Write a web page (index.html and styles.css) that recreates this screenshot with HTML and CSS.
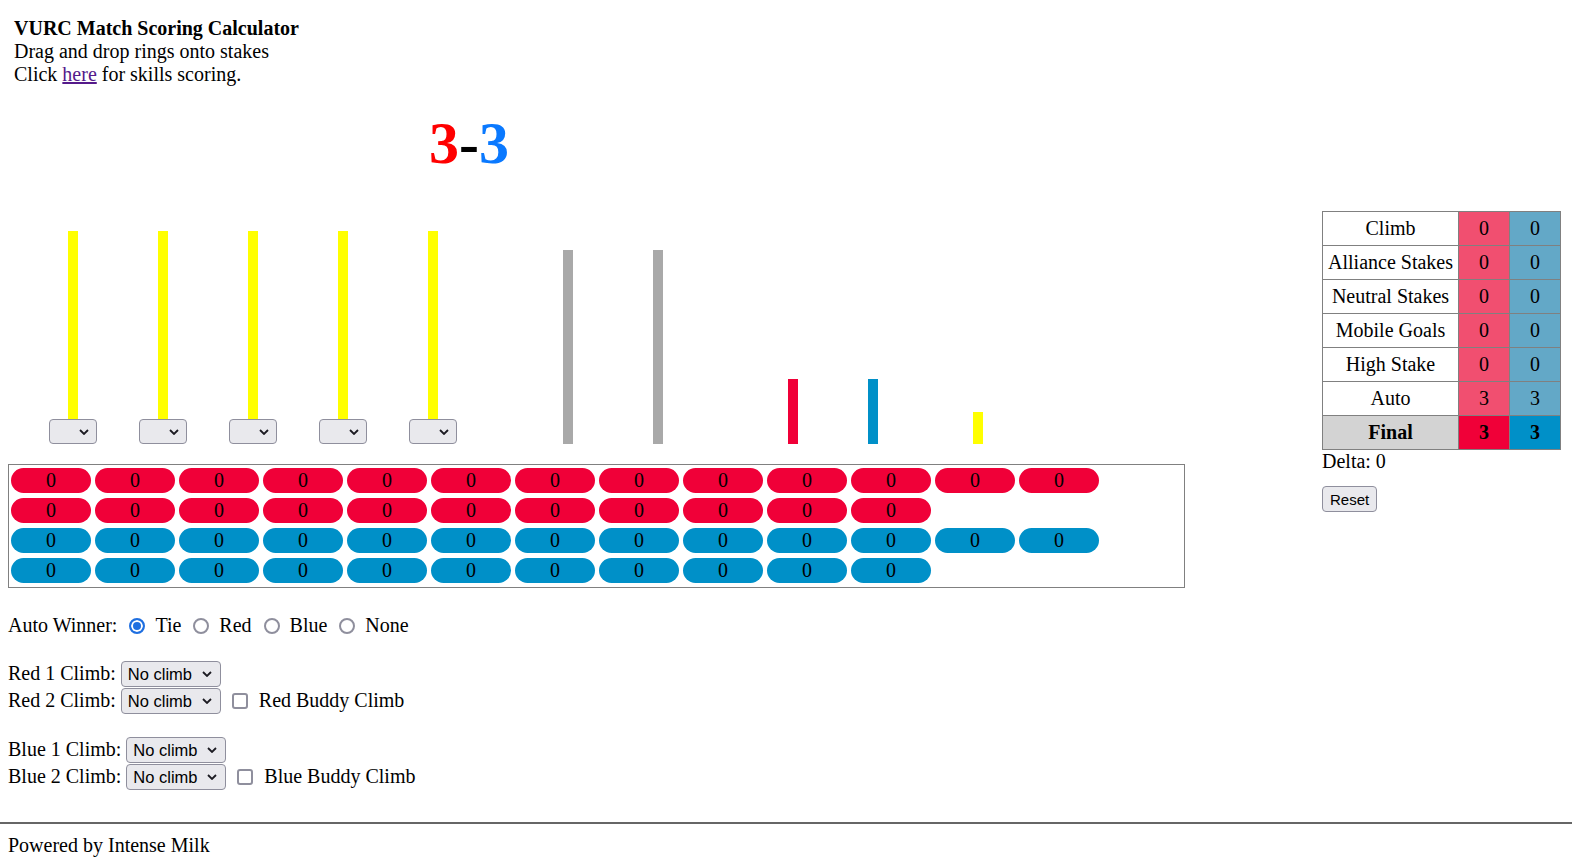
FILE: index.html
```html
<!DOCTYPE html>
<html lang="en">
<head>
    <meta charset="UTF-8">
    <meta name="viewport" content="width=device-width, initial-scale=1.0">
    <title>VURC Match Scoring Calculator</title>
<link rel="stylesheet" href="styles.css">
</head>
<body>
<div class="page">
    <div class="intro">
        <h1>VURC Match Scoring Calculator</h1>
        <div>Drag and drop rings onto stakes</div>
        <div>Click <a href="#">here</a> for skills scoring.</div>
    </div>

    <div class="score"><span class="red-score">3</span>-<span class="blue-score">3</span></div>

    <div class="board">
        <div class="field">
            <!-- mobile goals with their ring stakes -->
            <div class="stakes">
                <div class="stake">
                    <div class="pole goal"></div>
                    <span class="dropdown small">
                        <select class="pick"><option></option><option>Red</option><option>Blue</option></select>
                        <svg class="chev" width="10" height="6" viewBox="0 0 10 6"><path d="M1 1l4 4 4-4" fill="none" stroke="#1c1b22" stroke-width="1.8"/></svg>
                    </span>
                </div>
                <div class="stake">
                    <div class="pole goal"></div>
                    <span class="dropdown small">
                        <select class="pick"><option></option><option>Red</option><option>Blue</option></select>
                        <svg class="chev" width="10" height="6" viewBox="0 0 10 6"><path d="M1 1l4 4 4-4" fill="none" stroke="#1c1b22" stroke-width="1.8"/></svg>
                    </span>
                </div>
                <div class="stake">
                    <div class="pole goal"></div>
                    <span class="dropdown small">
                        <select class="pick"><option></option><option>Red</option><option>Blue</option></select>
                        <svg class="chev" width="10" height="6" viewBox="0 0 10 6"><path d="M1 1l4 4 4-4" fill="none" stroke="#1c1b22" stroke-width="1.8"/></svg>
                    </span>
                </div>
                <div class="stake">
                    <div class="pole goal"></div>
                    <span class="dropdown small">
                        <select class="pick"><option></option><option>Red</option><option>Blue</option></select>
                        <svg class="chev" width="10" height="6" viewBox="0 0 10 6"><path d="M1 1l4 4 4-4" fill="none" stroke="#1c1b22" stroke-width="1.8"/></svg>
                    </span>
                </div>
                <div class="stake">
                    <div class="pole goal"></div>
                    <span class="dropdown small">
                        <select class="pick"><option></option><option>Red</option><option>Blue</option></select>
                        <svg class="chev" width="10" height="6" viewBox="0 0 10 6"><path d="M1 1l4 4 4-4" fill="none" stroke="#1c1b22" stroke-width="1.8"/></svg>
                    </span>
                </div>

                <!-- neutral, alliance and high stakes -->
                <div class="pole neutral n1"></div>
                <div class="pole neutral n2"></div>
                <div class="pole alliance-red"></div>
                <div class="pole alliance-blue"></div>
                <div class="pole high"></div>
            </div>

            <div class="rings">
                <div class="ring-row">
                    <div class="ring red">0</div><div class="ring red">0</div><div class="ring red">0</div><div class="ring red">0</div><div class="ring red">0</div><div class="ring red">0</div><div class="ring red">0</div><div class="ring red">0</div><div class="ring red">0</div><div class="ring red">0</div><div class="ring red">0</div><div class="ring red">0</div><div class="ring red">0</div>
                </div>
                <div class="ring-row">
                    <div class="ring red">0</div><div class="ring red">0</div><div class="ring red">0</div><div class="ring red">0</div><div class="ring red">0</div><div class="ring red">0</div><div class="ring red">0</div><div class="ring red">0</div><div class="ring red">0</div><div class="ring red">0</div><div class="ring red">0</div>
                </div>
                <div class="ring-row">
                    <div class="ring blue">0</div><div class="ring blue">0</div><div class="ring blue">0</div><div class="ring blue">0</div><div class="ring blue">0</div><div class="ring blue">0</div><div class="ring blue">0</div><div class="ring blue">0</div><div class="ring blue">0</div><div class="ring blue">0</div><div class="ring blue">0</div><div class="ring blue">0</div><div class="ring blue">0</div>
                </div>
                <div class="ring-row">
                    <div class="ring blue">0</div><div class="ring blue">0</div><div class="ring blue">0</div><div class="ring blue">0</div><div class="ring blue">0</div><div class="ring blue">0</div><div class="ring blue">0</div><div class="ring blue">0</div><div class="ring blue">0</div><div class="ring blue">0</div><div class="ring blue">0</div>
                </div>
            </div>

            <div class="controls">
                <div class="auto">
                    <span>Auto Winner:</span>
                    <label class="choice"><input type="radio" name="auto" checked>Tie</label>
                    <label class="choice"><input type="radio" name="auto">Red</label>
                    <label class="choice"><input type="radio" name="auto">Blue</label>
                    <label class="choice"><input type="radio" name="auto">None</label>
                </div>

                <div class="climb">
                    <span>Red 1 Climb:</span>
                    <span class="dropdown wide">
                        <select class="pick"><option>No climb</option><option>Level 1</option><option>Level 2</option><option>Level 3</option></select>
                        <svg class="chev" width="10" height="6" viewBox="0 0 10 6"><path d="M1 1l4 4 4-4" fill="none" stroke="#1c1b22" stroke-width="1.8"/></svg>
                    </span>
                </div>
                <div class="climb">
                    <span>Red 2 Climb:</span>
                    <span class="dropdown wide">
                        <select class="pick"><option>No climb</option><option>Level 1</option><option>Level 2</option><option>Level 3</option></select>
                        <svg class="chev" width="10" height="6" viewBox="0 0 10 6"><path d="M1 1l4 4 4-4" fill="none" stroke="#1c1b22" stroke-width="1.8"/></svg>
                    </span>
                    <label class="buddy"><input type="checkbox">Red Buddy Climb</label>
                </div>

                <div class="climb spaced">
                    <span>Blue 1 Climb:</span>
                    <span class="dropdown wide">
                        <select class="pick"><option>No climb</option><option>Level 1</option><option>Level 2</option><option>Level 3</option></select>
                        <svg class="chev" width="10" height="6" viewBox="0 0 10 6"><path d="M1 1l4 4 4-4" fill="none" stroke="#1c1b22" stroke-width="1.8"/></svg>
                    </span>
                </div>
                <div class="climb">
                    <span>Blue 2 Climb:</span>
                    <span class="dropdown wide">
                        <select class="pick"><option>No climb</option><option>Level 1</option><option>Level 2</option><option>Level 3</option></select>
                        <svg class="chev" width="10" height="6" viewBox="0 0 10 6"><path d="M1 1l4 4 4-4" fill="none" stroke="#1c1b22" stroke-width="1.8"/></svg>
                    </span>
                    <label class="buddy"><input type="checkbox">Blue Buddy Climb</label>
                </div>
            </div>
        </div>

        <div class="tally">
            <table class="totals">
                <tr><td class="label">Climb</td><td class="r">0</td><td class="b">0</td></tr>
                <tr><td class="label">Alliance Stakes</td><td class="r">0</td><td class="b">0</td></tr>
                <tr><td class="label">Neutral Stakes</td><td class="r">0</td><td class="b">0</td></tr>
                <tr><td class="label">Mobile Goals</td><td class="r">0</td><td class="b">0</td></tr>
                <tr><td class="label">High Stake</td><td class="r">0</td><td class="b">0</td></tr>
                <tr><td class="label">Auto</td><td class="r">3</td><td class="b">3</td></tr>
                <tr class="final"><td class="label">Final</td><td class="r">3</td><td class="b">3</td></tr>
            </table>
            <div class="delta">Delta: 0</div>
            <button class="reset">Reset</button>
        </div>
    </div>
</div>

<div class="footer">Powered by Intense Milk</div>
</body>
</html>
```

FILE: styles.css
```css
body {
    margin: 0;
    font-family: "Liberation Serif", "Times New Roman", serif;
    font-size: 20px;
    line-height: 23px;
    color: #000;
    background: #fff;
}

.page {
    padding: 0 8px;
}

.intro {
    padding: 17px 0 0 6px;
}

.intro h1 {
    margin: 0;
    font-size: 20px;
    font-weight: bold;
}

.intro a {
    color: #551a8b;
}

.score {
    padding: 27px 0 38px 421px;
    font-size: 60px;
    line-height: 60px;
    font-weight: bold;
}

.red-score {
    color: #ff0000;
}

.blue-score {
    color: #0a79ff;
}

.board {
    display: flex;
    justify-content: space-between;
    align-items: flex-start;
}

.field {
    width: 1177px;
}

/* stakes */
.stakes {
    display: flex;
    align-items: flex-end;
    margin-top: 20px;
    padding-left: 41px;
}

.stake {
    display: flex;
    flex-direction: column;
    align-items: center;
    width: 48px;
}

.stake + .stake {
    margin-left: 42px;
}

.pole {
    width: 10px;
    flex-shrink: 0;
}

.pole.goal {
    height: 188px;
    background: #ffff00;
}

.pole.neutral {
    height: 194px;
    background: #a9a9a9;
}

.pole.n1 { margin-left: 106px; }
.pole.n2 { margin-left: 80px; }

.pole.alliance-red {
    height: 65px;
    margin-left: 125px;
    background: #f00038;
}

.pole.alliance-blue {
    height: 65px;
    margin-left: 70px;
    background: #0090c8;
}

.pole.high {
    height: 32px;
    margin-left: 95px;
    background: #ffff00;
}

/* dropdowns */
.dropdown {
    position: relative;
    display: inline-flex;
}

.pick {
    appearance: none;
    -webkit-appearance: none;
    margin: 0;
    border: 1px solid #8f8f9d;
    border-radius: 4px;
    background: #e9e9ed;
    color: #000;
    font-family: "Liberation Sans", Arial, sans-serif;
    font-size: 16.5px;
    padding: 0 0 0 6px;
    outline: none;
}

.dropdown.small .pick {
    width: 48px;
    height: 25px;
}

.dropdown.wide .pick {
    width: 100px;
    height: 26px;
}

.chev {
    position: absolute;
    top: 50%;
    margin-top: -3px;
    pointer-events: none;
}

.dropdown.small .chev { right: 8px; }
.dropdown.wide .chev { right: 9px; }

/* ring tray */
.rings {
    margin-top: 20px;
    border: 1px solid #808080;
    padding: 3px 2px 4px;
    display: flex;
    flex-direction: column;
    gap: 5px;
}

.ring-row {
    display: flex;
    gap: 4px;
}

.ring {
    width: 80px;
    height: 25px;
    border-radius: 13px;
    line-height: 25px;
    text-align: center;
}

.ring.red { background: #f00038; }
.ring.blue { background: #0090c8; }

/* bottom controls */
.controls {
    margin-top: 26px;
}

.auto {
    display: flex;
    align-items: center;
    gap: 12px;
    height: 23px;
    margin-bottom: 23px;
}

.choice {
    display: flex;
    align-items: center;
    gap: 10px;
}

.choice input {
    appearance: none;
    -webkit-appearance: none;
    width: 16px;
    height: 16px;
    margin: 0;
    border: 2px solid #8f8f9d;
    border-radius: 50%;
    background: #fff;
}

.choice input:checked {
    border-color: #1f6fe0;
    background: #1f6fe0;
    box-shadow: inset 0 0 0 2px #fff;
}

.climb {
    display: flex;
    align-items: center;
    gap: 5px;
    height: 27px;
}

.climb.spaced {
    margin-top: 22px;
}

.buddy {
    display: flex;
    align-items: center;
    gap: 11px;
    margin-left: 6px;
}

.buddy input {
    appearance: none;
    -webkit-appearance: none;
    width: 16px;
    height: 16px;
    margin: 0;
    border: 2px solid #8f8f9d;
    border-radius: 3px;
    background: #fff;
}

/* score table */
.tally {
    margin-right: 3px;
}

.totals {
    border-collapse: collapse;
    table-layout: fixed;
    width: 238px;
}

.totals td {
    box-sizing: border-box;
    border: 1px solid #808080;
    padding: 5px 4px;
    text-align: center;
    white-space: nowrap;
}

.totals td.label {
    width: 136px;
}

.totals td.r {
    width: 51px;
    background: #f14f70;
}

.totals td.b {
    width: 51px;
    background: #63a8c7;
}

.totals .final td {
    font-weight: bold;
}

.totals .final td.label { background: #d3d3d3; }
.totals .final td.r { background: #f00038; }
.totals .final td.b { background: #0090c8; }

.delta {
    line-height: 23px;
}

.reset {
    margin-top: 13px;
    height: 26px;
    padding: 0 7px;
    border: 1px solid #8f8f9d;
    border-radius: 4px;
    background: #e9e9ed;
    color: #000;
    font-family: "Liberation Sans", Arial, sans-serif;
    font-size: 15px;
}

.footer {
    margin-top: 32px;
    border-top: 2px solid #666;
    padding: 10px 8px 0;
}
```
